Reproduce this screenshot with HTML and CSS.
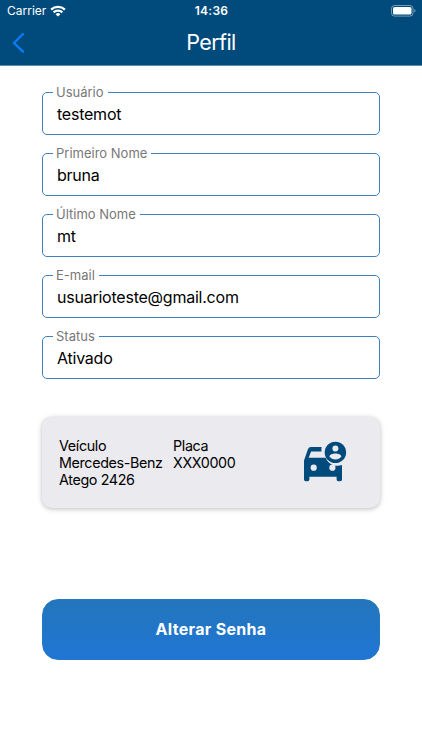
FILE: index.html
```html
<!DOCTYPE html>
<html lang="pt-BR">
<head>
  <meta charset="UTF-8" />
  <meta name="viewport" content="width=device-width, initial-scale=1.0"/>
  <title>Perfil</title>
  <link rel="stylesheet" href="styles.css">
</head>
<body>
  <header class="header">
    <div class="status-bar">
      <div class="carrier">
        <span>Carrier</span>
        <svg width="16" height="12" viewBox="0 0 16 12" fill="none" stroke="#fff" stroke-width="2.2">
          <path d="M1.1 4.6a10 10 0 0 1 13.8 0"/>
          <path d="M3.6 7.4a6.3 6.3 0 0 1 8.8 0"/>
          <path d="M8 11.6L5.6 9.2a3.5 3.5 0 0 1 4.8 0z" fill="#fff" stroke="none"/>
        </svg>
      </div>
      <span class="time">14:36</span>
      <svg class="battery" width="25" height="12" viewBox="0 0 25 12">
        <rect x="0.5" y="0.5" width="21.5" height="10.6" rx="3" fill="none" stroke="#fff" stroke-opacity="0.45"/>
        <rect x="2" y="2" width="18.5" height="7.6" rx="1.6" fill="#fff"/>
        <path d="M23.3 4v3.6q1.2-.5 1.2-1.8T23.3 4z" fill="#fff" fill-opacity="0.5"/>
      </svg>
    </div>
    <div class="nav-bar">
      <button class="back" aria-label="Voltar">
        <svg width="14" height="22" viewBox="0 0 14 22" fill="none" stroke="#0a7cf8" stroke-width="2.4" stroke-linecap="round" stroke-linejoin="round">
          <path d="M11 2L2 11l9 8.6"/>
        </svg>
      </button>
      <h1>Perfil</h1>
    </div>
  </header>

  <main class="profile">
    <div class="fields">
      <fieldset class="field">
        <legend>Usuário</legend>
        <span>testemot</span>
      </fieldset>
      <fieldset class="field">
        <legend>Primeiro Nome</legend>
        <span>bruna</span>
      </fieldset>
      <fieldset class="field">
        <legend>Último Nome</legend>
        <span>mt</span>
      </fieldset>
      <fieldset class="field">
        <legend>E-mail</legend>
        <span>usuarioteste@gmail.com</span>
      </fieldset>
      <fieldset class="field">
        <legend>Status</legend>
        <span>Ativado</span>
      </fieldset>
    </div>

    <div class="vehicle-card">
      <div class="vehicle">
        <div>Veículo</div>
        <div>Mercedes-Benz Atego 2426</div>
      </div>
      <div class="plate">
        <div>Placa</div>
        <div>XXX0000</div>
      </div>
      <svg class="car" width="44" height="42" viewBox="0 0 44 42">
        <path fill="#004b7c" d="M18.6 6H8q-2.3 0-3 2L1 19.5v19q0 1.8 1.8 1.8h1.8q1.800 0 1.800-1.800v-2.700h27.200v2.700q0 1.800 1.800 1.800h1.800q1.800 0 1.800-1.800V24.100a13.100 13.100 0 0 1-16.400-7.400H5.700l2.400-6.200h10.400q-.3-2.400.1-4.500z"/>
        <circle cx="10.7" cy="26.7" r="3.1" fill="#ebeaef"/>
        <circle cx="29.4" cy="26.7" r="3.1" fill="#ebeaef"/>
        <circle cx="32.4" cy="11.4" r="10.7" fill="#004b7c"/>
        <circle cx="32.4" cy="7.5" r="3" fill="#ebeaef"/>
        <path fill="#ebeaef" d="M26.4 15.6c0-2.2 3.5-3.2 6-3.2s6 1 6 3.2c-1.4 1.9-3.5 3-6 3s-4.6-1.1-6-3z"/>
      </svg>
    </div>

    <button class="change-password">Alterar Senha</button>
  </main>
</body>
</html>
```
FILE: styles.css
```css
* {
  box-sizing: border-box;
}

body {
  margin: 0;
  padding: 0;
  background-color: #fff;
  color: #000;
  font-family: Inter, "Liberation Sans", sans-serif;
}

.header {
  height: 66px;
  background-color: #004b7c;
  border-bottom: 1px solid #5d8dad;
  color: white;
}

.status-bar {
  display: grid;
  grid-template-columns: 1fr auto 1fr;
  align-items: center;
  height: 21px;
  padding: 0 6px 0 7px;
  font-size: 12px;
}

.carrier {
  display: flex;
  align-items: center;
  gap: 4px;
}

.time {
  font-weight: 600;
  letter-spacing: 0.3px;
}

.battery {
  justify-self: end;
}

.nav-bar {
  display: grid;
  grid-template-columns: 40px 1fr 40px;
  align-items: center;
  height: 43px;
}

.back {
  display: flex;
  padding: 0 0 0 12px;
  border: none;
  background: none;
}

.nav-bar h1 {
  margin: 0;
  padding-bottom: 2px;
  font-size: 21.5px;
  font-weight: 400;
  letter-spacing: -0.6px;
  line-height: 26px;
  text-align: center;
}

.profile {
  padding: 18px 42px 0;
}

.fields {
  display: flex;
  flex-direction: column;
  gap: 10px;
}

.field {
  height: 51px;
  min-width: 0;
  margin: 0;
  padding: 0 10px;
  border: 1px solid #3d80bd;
  border-radius: 5px;
}

.field legend {
  padding: 0 4px 0 3px;
  color: #777;
  font-size: 13px;
  line-height: 17px;
}

.field span {
  display: block;
  padding: 3px 4px 0;
  font-size: 16px;
  letter-spacing: -0.23px;
  line-height: 21px;
}

.vehicle-card {
  display: flex;
  height: 91px;
  margin-top: 38px;
  padding: 20px 17px;
  border-radius: 10px;
  background-color: #ebeaef;
  box-shadow: 0 1px 5px rgba(0, 0, 0, 0.27);
  font-size: 14.3px;
  letter-spacing: -0.35px;
  line-height: 17.2px;
}

.vehicle {
  width: 114px;
}

.plate {
  flex: 1;
}

.car {
  margin: 4px 16px 0 0;
}

.change-password {
  display: block;
  width: 100%;
  height: 61px;
  margin-top: 91px;
  padding-bottom: 3px;
  border: 1px solid #2878c0;
  border-radius: 16px;
  background: linear-gradient(#2376bb, #2075d5);
  color: white;
  font-family: inherit;
  font-size: 16px;
  font-weight: 700;
  letter-spacing: 0.3px;
}
```
